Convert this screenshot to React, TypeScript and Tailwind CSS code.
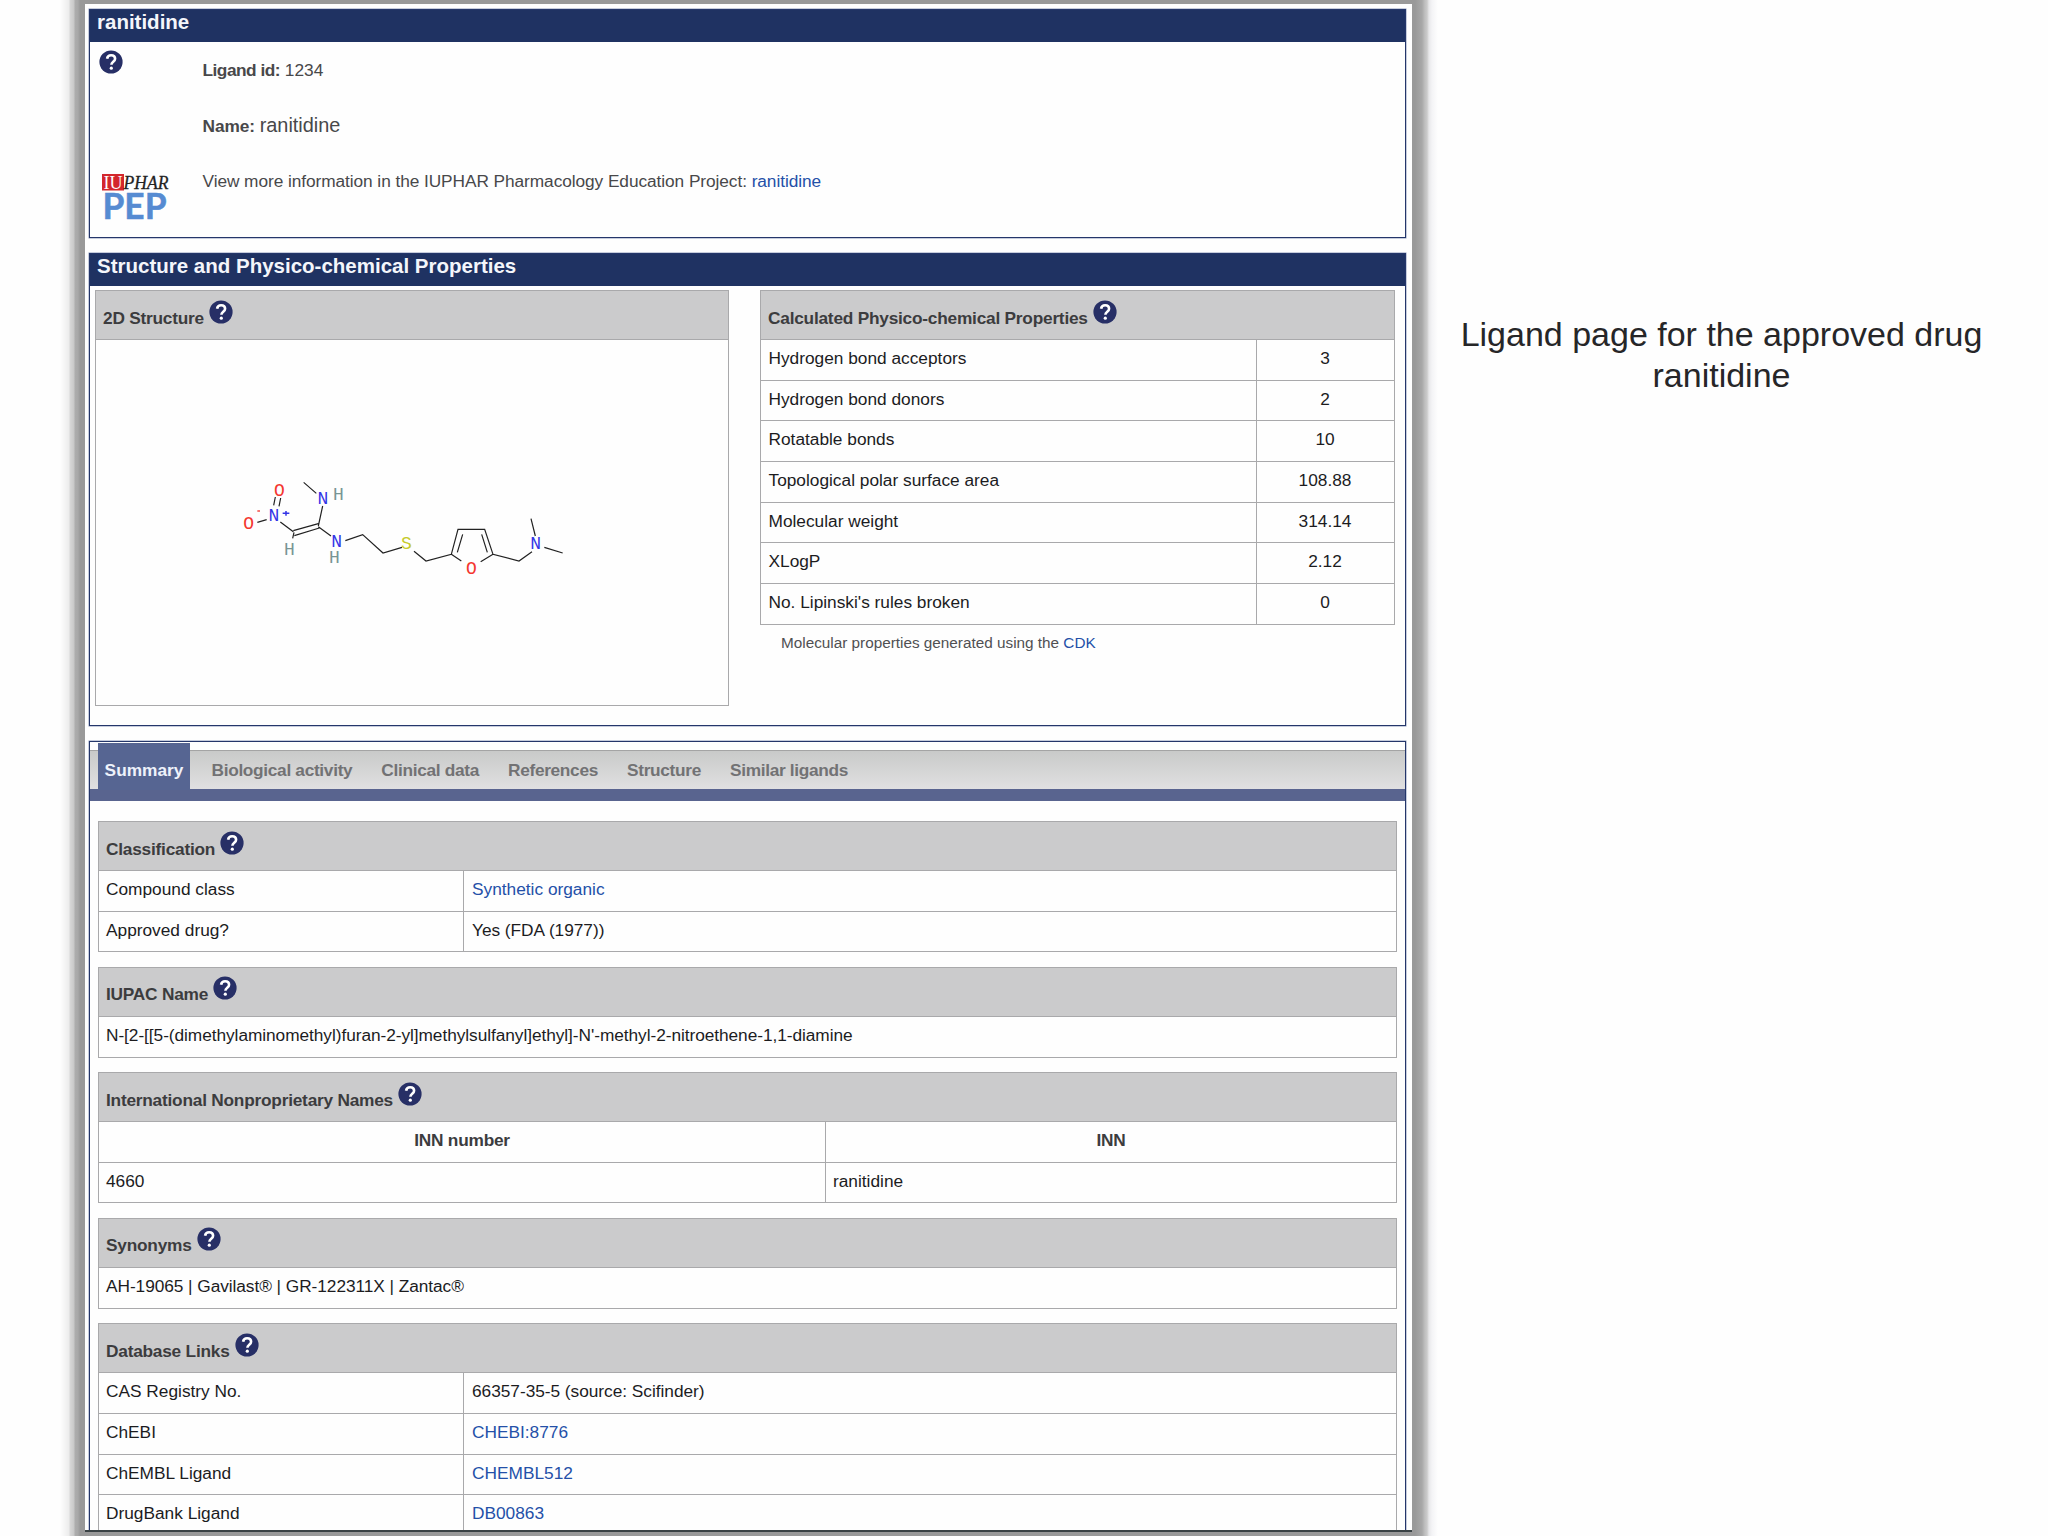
import type { ReactNode } from "react"

const properties = [
  { label: "Hydrogen bond acceptors", value: "3" },
  { label: "Hydrogen bond donors", value: "2" },
  { label: "Rotatable bonds", value: "10" },
  { label: "Topological polar surface area", value: "108.88" },
  { label: "Molecular weight", value: "314.14" },
  { label: "XLogP", value: "2.12" },
  { label: "No. Lipinski's rules broken", value: "0" },
]

const tabs = ["Biological activity", "Clinical data", "References", "Structure", "Similar ligands"]

const databaseLinks = [
  { label: "CAS Registry No.", value: "66357-35-5 (source: Scifinder)", link: false },
  { label: "ChEBI", value: "CHEBI:8776", link: true },
  { label: "ChEMBL Ligand", value: "CHEMBL512", link: true },
  { label: "DrugBank Ligand", value: "DB00863", link: true },
]

function HelpIcon() {
  return (
    <svg viewBox="0 0 24 24" className="size-6 shrink-0">
      <circle cx="12" cy="12" r="11.6" fill="#272f66" />
      <path d="M8.100 8.800c.3-2.200 1.800-3.500 4-3.500 2.300 0 4 1.300 4 3.400 0 3-3.700 3.100-3.700 6" fill="none" stroke="#fff" strokeWidth="2.600" />
      <circle cx="12.300" cy="18.200" r="1.600" fill="#fff" />
    </svg>
  )
}

function Panel({ title, className, children }: { title?: string; className: string; children: ReactNode }) {
  return (
    <section className={`border border-[#24366a] shadow-[0_0_0_0.5px_#8f9abb] ${className}`}>
      {title && (
        <h2 className="h-[32px] bg-[#1f3262] pl-[7px] text-[20.5px] leading-[24px] font-bold text-[#f4f6fb]">{title}</h2>
      )}
      {children}
    </section>
  )
}

function TableHead({ children }: { children: ReactNode }) {
  return (
    <div className="flex h-[49px] gap-[5px] border-b border-[#a9a9ab] bg-[#cbcbcc] pl-[7px] font-bold tracking-[-0.23px] text-[#3c3c3e]">
      <span className="pt-[16.5px] leading-5">{children}</span>
      <span className="pt-[8.5px]">
        <HelpIcon />
      </span>
    </div>
  )
}

function Table({ title, children }: { title: string; children: ReactNode }) {
  return (
    <div className="mb-[14.6px] border border-b-0 border-[#a9a9ab]">
      <TableHead>{title}</TableHead>
      {children}
    </div>
  )
}

function Row({ label, children, link }: { label: string; children?: ReactNode; link?: boolean }) {
  return (
    <div className="flex h-[40.65px] border-b border-[#a9a9ab] leading-[36px]">
      <div className={children ? "w-[365px] border-r border-[#a9a9ab] pl-[7px]" : "pl-[7px] tracking-[-0.06px]"}>{label}</div>
      {children && <div className={link ? "pl-[8px] text-[#2450a8]" : "pl-[8px] tracking-[-0.03px]"}>{children}</div>}
    </div>
  )
}

function Logo() {
  return (
    <svg width="76" height="54" viewBox="0 0 76 54">
      <rect x="1" y="1" width="22" height="16.500" fill="#d3262c" />
      <text x="2.500" y="15.800" fontFamily="Liberation Serif, serif" fontSize="19" fill="#fff" textLength="19" lengthAdjust="spacingAndGlyphs">
        IU
      </text>
      <text x="22.500" y="15.500" fontFamily="Liberation Serif, serif" fontSize="19" fontStyle="italic" fill="#222" stroke="#222" strokeWidth="0.300" textLength="45" lengthAdjust="spacingAndGlyphs">
        PHAR
      </text>
      <text x="1.500" y="45.500" fontFamily="Lato, sans-serif" fontSize="35.500" fontWeight="bold" fill="#568bd2" stroke="#568bd2" strokeWidth="0.500" textLength="64" lengthAdjust="spacingAndGlyphs">
        PEP
      </text>
    </svg>
  )
}

const atoms = [
  { s: "O", x: 148, y: 107, c: "#f4362f" },
  { s: "O", x: 56, y: 208, c: "#f4362f" },
  { s: "N", x: 132, y: 182, c: "#3434e6" },
  { s: "N", x: 279, y: 132, c: "#3434e6" },
  { s: "H", x: 325, y: 120, c: "#789595" },
  { s: "H", x: 178, y: 284, c: "#789595" },
  { s: "N", x: 320, y: 262, c: "#3434e6" },
  { s: "H", x: 313, y: 309, c: "#789595" },
  { s: "S", x: 529, y: 267, c: "#c6ca2a" },
  { s: "O", x: 724, y: 342, c: "#f4362f" },
  { s: "N", x: 917, y: 266, c: "#3434e6" },
]

// Skeletal formula; three drawing units per pixel
function Molecule() {
  return (
    <svg width="350" height="130" viewBox="0 0 1050 390">
      <path
        d="M131 136l5-25M147 139l5-25M82 187l28-8M151 186l39 29M190 212l75-21M193 227l75-23M192 217l-4 18M265 198l13-60M221 67l38 33M265 200l38 28M346 242l52-18 61 55 57-17M552 274l36 29 76-20 20-75h80l25 75 78 20 39-28M664 283l30 20M682 277l16-54M789 283l-37 22M772 277l-17-54M916 228l-13-52M943 262l55 17"
        fill="none"
        stroke="#222"
        strokeWidth="3.600"
      />
      <path d="M82 153h8" stroke="#f4362f" strokeWidth="4" />
      <path d="M158 160h20M168 153v14" stroke="#3434e6" strokeWidth="4.500" />
      {atoms.map((a, i) => (
        <text key={i} x={a.x} y={a.y} fill={a.c} textAnchor="middle" fontFamily="Liberation Mono, monospace" fontSize="54">
          {a.s}
        </text>
      ))}
    </svg>
  )
}

export default function App() {
  return (
    <div className="flex h-[1536px] w-[2048px] overflow-hidden bg-[#fefefe] font-['Liberation_Sans',Arial,sans-serif] text-[17.3px] text-[#1c1c1e]">
      {/* Captured page with its grey frame */}
      <div className="ml-[60px] h-[1536px] w-[1378px] bg-[linear-gradient(to_right,#fefefe_0px,#f4f4f4_5px,#ececec_9px,#d8d8d8_10px,#c8c8c8_14px,#adadad_15px,#a8a8a8_18px,#999_20px,#999_1355px,#a8a8a8_1362px,#c0c0c0_1365px,#cacaca_1367px,#e8e8ea_1369px,#f4f4f6_1372px,#fefefe_1378px)] pt-1 pl-[25px]">
        <div className="h-[1528px] w-[1327px] overflow-hidden border-b-2 border-[#3a4244] bg-[#fefefe] pt-[5px] pr-[6px] pl-[4px]">
          <Panel title="ranitidine" className="h-[229px]">
            <div className="flex text-[#48484a]">
              <div className="w-[112.5px] pl-[9px]">
                <div className="pt-[8px]">
                  <HelpIcon />
                </div>
                <div className="pt-[99px] pl-[1.5px]">
                  <Logo />
                </div>
              </div>
              <div className="leading-5">
                <p className="pt-[17.5px]">
                  <b className="tracking-[-0.5px]">Ligand id:</b> 1234
                </p>
                <p className="pt-[35px]">
                  <b className="tracking-[-0.1px]">Name:</b> <span className="text-[19.9px]">ranitidine</span>
                </p>
                <p className="pt-[35px] tracking-[-0.07px]">
                  View more information in the IUPHAR Pharmacology Education Project:{" "}
                  <a className="text-[#2450a8]">ranitidine</a>
                </p>
              </div>
            </div>
          </Panel>

          <Panel title="Structure and Physico-chemical Properties" className="mt-[15px] h-[473px]">
            <div className="flex gap-[31px] pt-[4px] pl-[5px]">
              <div className="h-[416px] w-[634px] border border-[#a9a9ab]">
                <TableHead>2D Structure</TableHead>
                <div className="pt-[120px] pl-[134px]">
                  <Molecule />
                </div>
              </div>
              <div className="w-[635px]">
                <div className="border border-b-0 border-[#a9a9ab]">
                  <TableHead>Calculated Physico-chemical Properties</TableHead>
                  {properties.map((p) => (
                    <div key={p.label} className="flex h-[40.7px] border-b border-[#a9a9ab] leading-[36px]">
                      <div className="flex-1 pl-[7.5px]">{p.label}</div>
                      <div className="w-[138px] border-l border-[#a9a9ab] pr-px text-center">{p.value}</div>
                    </div>
                  ))}
                </div>
                <p className="pt-[8px] pl-[21px] text-[15.3px] leading-5 text-[#505052]">
                  Molecular properties generated using the <a className="text-[#2450a8]">CDK</a>
                </p>
              </div>
            </div>
          </Panel>

          <Panel className="mt-[15px] h-[900px]">
            <nav className="mt-[8px] flex h-[51px] border-t border-b-[12px] border-t-[#a4a4a4] border-b-[#59648f] bg-linear-to-b from-[#c9cac9] to-[#e0e0e1] pl-[8px] leading-[38px] font-bold text-[#727274]">
              <div className="-mt-[8px] mr-[7px] h-[47px] w-[92px] bg-[#566592] pt-[8px] text-center text-[#eef2fb]">Summary</div>
              {tabs.map((tab) => (
                <div key={tab} className="px-[14.5px] tracking-[-0.32px]">
                  {tab}
                </div>
              ))}
            </nav>
            <div className="pt-[20px] pr-[8px] pl-[8px]">
              <Table title="Classification">
                <Row label="Compound class" link>
                  Synthetic organic
                </Row>
                <Row label="Approved drug?">Yes (FDA (1977))</Row>
              </Table>
              <Table title="IUPAC Name">
                <Row label="N-[2-[[5-(dimethylaminomethyl)furan-2-yl]methylsulfanyl]ethyl]-N'-methyl-2-nitroethene-1,1-diamine" />
              </Table>
              <Table title="International Nonproprietary Names">
                <div className="flex h-[40.65px] border-b border-[#a9a9ab] text-center leading-[36px] font-bold tracking-[-0.22px] text-[#3c3c3e]">
                  <div className="w-[727px] border-r border-[#a9a9ab]">INN number</div>
                  <div className="flex-1">INN</div>
                </div>
                <div className="flex h-[40.65px] border-b border-[#a9a9ab] leading-[36px]">
                  <div className="w-[727px] border-r border-[#a9a9ab] pl-[7px]">4660</div>
                  <div className="pl-[7px]">ranitidine</div>
                </div>
              </Table>
              <Table title="Synonyms">
                <Row label="AH-19065 | Gavilast® | GR-122311X | Zantac®" />
              </Table>
              <Table title="Database Links">
                {databaseLinks.map((d) => (
                  <Row key={d.label} label={d.label} link={d.link}>
                    {d.value}
                  </Row>
                ))}
              </Table>
            </div>
          </Panel>
        </div>
      </div>

      {/* Slide caption */}
      <p className="w-[567px] pt-[314px] text-center text-[34px] leading-[40.5px] text-[#262628]">
        Ligand page for the approved drug
        <br />
        ranitidine
      </p>
    </div>
  )
}
